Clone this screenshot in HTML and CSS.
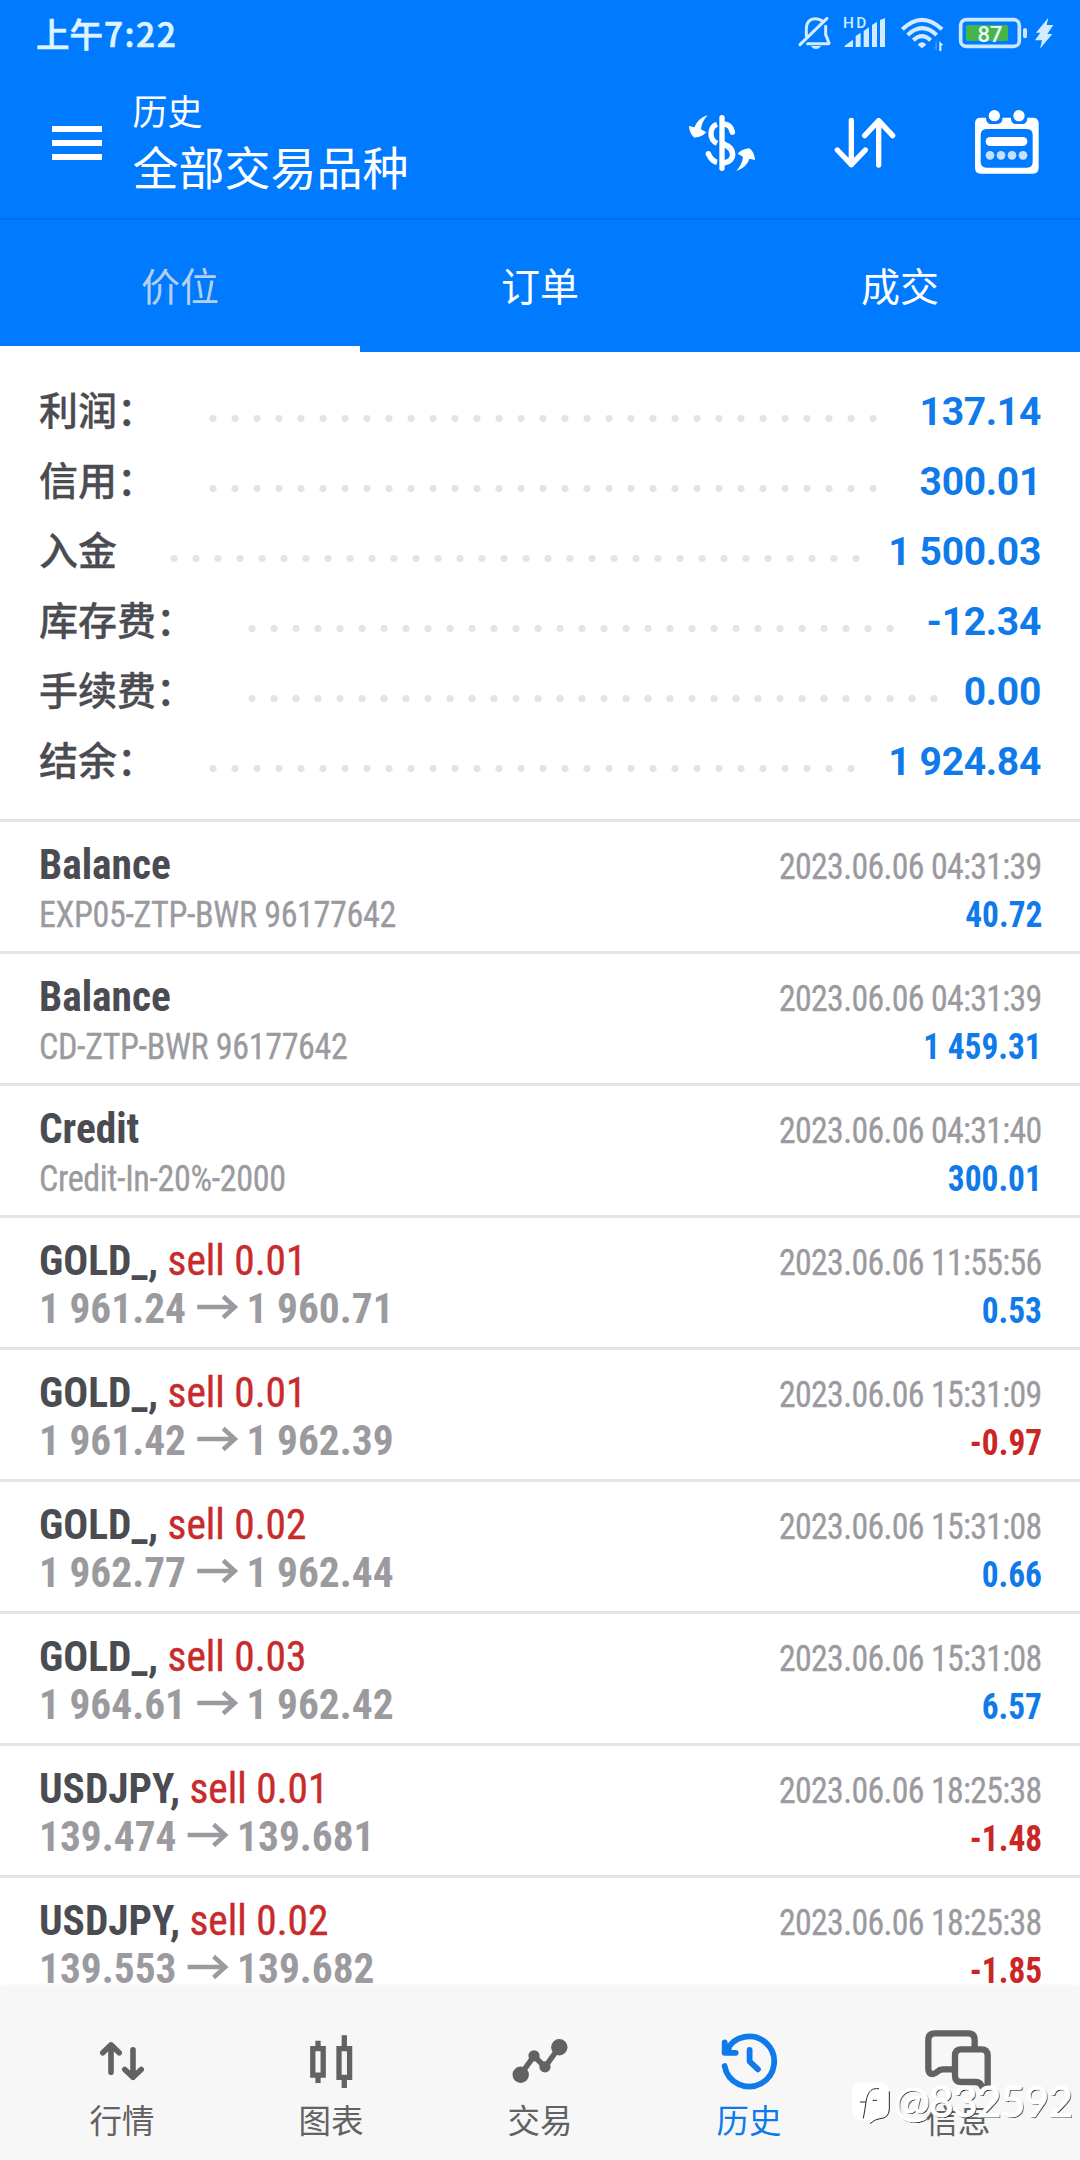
FILE: index.html
```html
<!DOCTYPE html>
<html lang="zh-CN">
<head>
<meta charset="utf-8">
<title>历史</title>
<link rel="stylesheet" href="styles.css">
</head>
<body>
<div class="app">
  <div class="status">
    <span class="clock">上午<span class="clock-num">7:22</span></span>
    <div class="status-icons">
      <svg class="bell" width="34" height="40" viewBox="414 42 102 120" fill="none" stroke="#d2ebff" stroke-width="9" stroke-linecap="round">
        <path d="M439 109V87C439 66 450 56 466 56C474 56 481 58 487 63M497 79V104L507 129Q508 131 505 131H443M420 134L501 55"/>
        <path d="M453 138H483Q478 147 468 147T453 138Z" fill="#d2ebff" stroke="none"/>
      </svg>
      <svg class="signal" width="43" height="40" viewBox="549 42 129 120" fill="#d2ebff">
        <text x="549" y="84" class="hd" textLength="70">HD</text>
        <path d="M554 141V137L579 119V141ZM587 141V108L602 98V141ZM611 141V93L627 82V141ZM636 141V75L651 65V141ZM660 141V60L675 54V141Z"/>
      </svg>
      <svg class="wifi" width="45" height="40" viewBox="720 42 135 120" fill="none" stroke="#d2ebff" stroke-width="12.5">
        <path d="M727 88Q786 31 846 88M743 105Q786 64 830 105M760 121Q786 96 812 121"/>
        <path d="M773 134Q786 120 799 134L786 145Z" fill="#d2ebff" stroke="none"/>
        <path d="M838 153V124L850 136H844V153Z" fill="#e4fbff" stroke="none"/>
        <path d="M831 124V153L820 141H826V124Z" fill="#2f96ff" stroke="none"/>
      </svg>
      <svg class="battery" width="70" height="40" viewBox="894 42 210 120">
        <rect x="902" y="59" width="176" height="80" rx="17" fill="none" stroke="#c9e7ff" stroke-width="11"/>
        <rect x="918" y="75" width="126" height="48" rx="6" fill="#46b548"/>
        <rect x="1089" y="84" width="12" height="31" rx="6" fill="#c9e7ff"/>
        <text x="990" y="125" class="pct">87</text>
      </svg>
      <svg class="bolt" width="20" height="40" viewBox="1122 42 60 120" fill="#d2ebff"><path d="M1165 53L1128 98H1141L1125 121H1146L1140 146L1177 102H1162L1180 75H1160Z"/></svg>
    </div>
  </div>

  <header class="bar">
    <svg class="menu" width="50" height="34" viewBox="0 0 50 34" fill="#fff"><path d="M0 0H50V6H0ZM0 14H50V20H0ZM0 28H50V34H0Z"/></svg>
    <div class="titles">
      <div class="crumb">历史</div>
      <h1 class="title">全部交易品种</h1>
    </div>
    <div class="actions">
      <svg width="68" height="70" viewBox="84 324 204 210" fill="none" stroke="#fff">
        <path d="M186 353V505" stroke-width="16" stroke-linecap="round"/>
        <path d="M171 373C148 381 146 418 171 430M171 487C158 484 151 475 145 461" stroke-width="16"/>
        <circle cx="145" cy="461" r="8" fill="#fff" stroke="none"/>
        <path d="M192 372C205 373 214 382 217 396M190 432C227 446 227 483 192 489" stroke-width="17" stroke-linecap="round"/>
        <path d="M143 346C124 351 110 364 104 382L87 378C88 395 95 408 105 413C116 411 128 409 139 397L123 388C125 370 132 358 143 346Z" fill="#fff" stroke="none"/>
        <path d="M229 512C248 507 262 494 268 476L285 480C284 463 277 450 267 445C256 447 244 449 233 461L249 470C247 488 240 500 229 512Z" fill="#fff" stroke="none"/>
      </svg>
      <svg width="62" height="70" viewBox="522 324 186 210" fill="none" stroke="#fff" stroke-width="16" stroke-linecap="round" stroke-linejoin="round">
        <path d="M574 361V494M532 450L574 494L616 450M656 495V362M614 407L656 362L698 407"/>
      </svg>
      <svg width="68" height="70" viewBox="939 324 204 210">
        <path fill="#fff" fill-rule="evenodd" d="M961 353H978C978 366 985 372 994 372H1012C1022 372 1028 366 1027 353H1053C1053 366 1059 372 1068 372H1086C1096 372 1102 366 1102 353H1119Q1136 353 1136 370V504Q1136 521 1119 521H962Q945 521 945 504V370Q945 353 961 353ZM980 387Q962 387 962 405V486Q962 503 980 503H1101Q1118 503 1118 486V405Q1118 387 1101 387Z"/>
        <circle cx="1003" cy="347" r="17" fill="#fff"/><circle cx="1077" cy="347" r="17" fill="#fff"/>
        <rect x="977" y="411" width="125" height="27" rx="13.5" fill="#fff"/>
        <g fill="#c4e1ff"><circle cx="990" cy="466" r="13"/><circle cx="1023" cy="466" r="13"/><circle cx="1056" cy="466" r="13"/><circle cx="1089" cy="466" r="13"/></g>
      </svg>
    </div>
  </header>

  <nav class="tabs">
    <span class="tab current">价位</span>
    <span class="tab">订单</span>
    <span class="tab">成交</span>
  </nav>

  <section class="summary">
    <div class="sum"><span>利润：</span><i class="dots" style="--n:31"></i><b>137.14</b></div>
    <div class="sum"><span>信用：</span><i class="dots" style="--n:31"></i><b>300.01</b></div>
    <div class="sum"><span>入金</span><i class="dots" style="--n:32"></i><b>1 500.03</b></div>
    <div class="sum"><span>库存费：</span><i class="dots" style="--n:30"></i><b>-12.34</b></div>
    <div class="sum"><span>手续费：</span><i class="dots" style="--n:32"></i><b>0.00</b></div>
    <div class="sum"><span>结余：</span><i class="dots" style="--n:30"></i><b>1 924.84</b></div>
  </section>

  <main class="deals">
    <article class="deal">
      <div class="line"><b class="name">Balance</b><time>2023.06.06 04:31:39</time></div>
      <div class="line"><span class="note">EXP05-ZTP-BWR 96177642</span><b class="amount">40.72</b></div>
    </article>
    <article class="deal">
      <div class="line"><b class="name">Balance</b><time>2023.06.06 04:31:39</time></div>
      <div class="line"><span class="note">CD-ZTP-BWR 96177642</span><b class="amount">1 459.31</b></div>
    </article>
    <article class="deal">
      <div class="line"><b class="name">Credit</b><time>2023.06.06 04:31:40</time></div>
      <div class="line"><span class="note">Credit-In-20%-2000</span><b class="amount">300.01</b></div>
    </article>
    <article class="deal">
      <div class="line"><span class="deal-head"><b>GOLD_,</b> <span class="side">sell 0.01</span></span><time>2023.06.06 11:55:56</time></div>
      <div class="line"><b class="price">1 961.24<svg class="arrow" viewBox="0 0 42 24"><path d="M0 12H38M27 1.5L39 12L27 22.5"/></svg>1 960.71</b><b class="amount">0.53</b></div>
    </article>
    <article class="deal">
      <div class="line"><span class="deal-head"><b>GOLD_,</b> <span class="side">sell 0.01</span></span><time>2023.06.06 15:31:09</time></div>
      <div class="line"><b class="price">1 961.42<svg class="arrow" viewBox="0 0 42 24"><path d="M0 12H38M27 1.5L39 12L27 22.5"/></svg>1 962.39</b><b class="amount loss">-0.97</b></div>
    </article>
    <article class="deal">
      <div class="line"><span class="deal-head"><b>GOLD_,</b> <span class="side">sell 0.02</span></span><time>2023.06.06 15:31:08</time></div>
      <div class="line"><b class="price">1 962.77<svg class="arrow" viewBox="0 0 42 24"><path d="M0 12H38M27 1.5L39 12L27 22.5"/></svg>1 962.44</b><b class="amount">0.66</b></div>
    </article>
    <article class="deal">
      <div class="line"><span class="deal-head"><b>GOLD_,</b> <span class="side">sell 0.03</span></span><time>2023.06.06 15:31:08</time></div>
      <div class="line"><b class="price">1 964.61<svg class="arrow" viewBox="0 0 42 24"><path d="M0 12H38M27 1.5L39 12L27 22.5"/></svg>1 962.42</b><b class="amount">6.57</b></div>
    </article>
    <article class="deal">
      <div class="line"><span class="deal-head"><b>USDJPY,</b> <span class="side">sell 0.01</span></span><time>2023.06.06 18:25:38</time></div>
      <div class="line"><b class="price">139.474<svg class="arrow" viewBox="0 0 42 24"><path d="M0 12H38M27 1.5L39 12L27 22.5"/></svg>139.681</b><b class="amount loss">-1.48</b></div>
    </article>
    <article class="deal">
      <div class="line"><span class="deal-head"><b>USDJPY,</b> <span class="side">sell 0.02</span></span><time>2023.06.06 18:25:38</time></div>
      <div class="line"><b class="price">139.553<svg class="arrow" viewBox="0 0 42 24"><path d="M0 12H38M27 1.5L39 12L27 22.5"/></svg>139.682</b><b class="amount loss">-1.85</b></div>
    </article>
  </main>

  <nav class="bottom">
    <a class="item">
      <svg width="60" height="64" viewBox="0 0 60 64" fill="none" stroke="currentColor" stroke-width="5.6" stroke-linecap="round" stroke-linejoin="round"><path d="M19 44.3V17.2M10.8 24.7L19 16.9L27.2 24.7M41 21.8V49.3M32.8 41.5L41 49.3L49.2 41.5"/></svg>
      行情
    </a>
    <a class="item">
      <svg width="60" height="64" viewBox="0 0 60 64" fill="none" stroke="currentColor" stroke-width="5.3"><path d="M11.8 20.7H22.2V47.1H11.8ZM38 20.7H48.6V49.4H38ZM17 12.7V20M17 48V55M43.3 7.3V20M43.3 50V60"/></svg>
      图表
    </a>
    <a class="item">
      <svg width="60" height="64" viewBox="0 0 60 64" fill="currentColor"><path d="M10.7 46.7L24 28L35 39L49.3 19" fill="none" stroke="currentColor" stroke-width="5.5"/><circle cx="10.7" cy="46.7" r="8.2"/><circle cx="24" cy="27.8" r="5.6"/><circle cx="35" cy="38.8" r="5.6"/><circle cx="49.3" cy="19.2" r="8.2"/></svg>
      交易
    </a>
    <a class="item on">
      <svg width="60" height="64" viewBox="0 0 60 64" fill="none" stroke="currentColor" stroke-width="5.8" stroke-linecap="round" stroke-linejoin="round"><path d="M5.6 38A25 25 0 1 0 7.5 23M5.7 14.5V24.8H16.7M5.7 24.8L10 18.5M30.6 22V33.3L39 41.3"/><path d="M4 24L12 17L13 24Z" stroke="none" fill="currentColor"/></svg>
      历史
    </a>
    <a class="item">
      <svg width="68" height="64" viewBox="252 24 204 192" fill="none" stroke="currentColor" stroke-width="19"><path d="M345 148H308C292 148 290 162 279 162Q265 162 265 146V60Q265 40 285 40H385Q404 40 404 60V85"/><path d="M443 203C432 205 427 203 424 196C420 187 414 186 405 186H365Q345 186 345 167V107Q345 88 364 88H424Q443 88 443 107Z"/></svg>
      信息
    </a>
  </nav>

  <div class="mark">
    <svg width="38" height="43" viewBox="38 187 114 129"><path d="M68 188H120Q150 188 150 218V268Q150 297 122 298L92 313L98 300H68Q38 300 38 270V218Q38 188 68 188Z" fill="#fff"/><path d="M150 215V268Q149 296 122 297Q108 298 92 312M62 247H80C84 220 94 206 112 207H119M80 247Q77 270 72 296M100 242H113" fill="none" stroke="#2a2a2a" stroke-width="3"/></svg>
    <span>@832592</span>
  </div>
</div>
</body>
</html>
```
FILE: styles.css
```css
* { box-sizing: border-box; }

body {
  margin: 0;
  font-family: Roboto, "Noto Sans CJK SC", sans-serif;
  background: #fff;
}

svg { display: block; flex: none; overflow: visible; }

.app {
  position: relative;
  width: 1080px;
  height: 2160px;
  display: flex;
  flex-direction: column;
  overflow: hidden;
}

/* Status bar */
.status {
  height: 68px;
  flex: none;
  display: flex;
  justify-content: space-between;
  align-items: center;
  padding: 0 26px 0 36px;
  background: #007aff;
}

.clock {
  margin-top: -2px;
  color: #def3ff;
  font: 500 33.5px/40px "Noto Sans CJK SC", sans-serif;
  -webkit-text-stroke: 0.7px #def3ff;
}

.clock-num { letter-spacing: 1.5px; margin-left: 1px; }

.status-icons { display: flex; }
.signal { margin-left: 11px; }
.wifi { margin-left: 14px; }
.battery { margin-left: 13px; }
.bolt { margin-left: 6px; }

.hd { font: 500 46px Roboto, sans-serif; }
.pct { font: 500 66px Roboto, sans-serif; fill: #e9fbff; text-anchor: middle; }

/* App bar */
.bar {
  height: 152px;
  flex: none;
  display: flex;
  align-items: flex-start;
  padding: 0 39px 0 52px;
  border-bottom: 2px solid #0070ea;
  background: #007aff;
  color: #fff;
}

.menu { margin-top: 58px; }

.titles {
  flex: 1;
  margin: 16px 0 0 30.5px;
  font-family: "Noto Sans CJK SC", sans-serif;
}

.crumb { font-size: 35px; line-height: 52px; font-weight: 400; }
.title { margin: -1px 0 0; font-size: 46px; line-height: 60px; font-weight: 400; }

.actions { display: flex; margin-top: 40px; }
.actions svg + svg { margin-left: 77.5px; }

/* Tabs */
.tabs {
  height: 132px;
  flex: none;
  display: grid;
  grid-template-columns: repeat(3, 1fr);
  background: #007aff;
}

.tab {
  padding-top: 35px;
  text-align: center;
  color: #fff;
  font: 400 39px/58px "Noto Sans CJK SC", sans-serif;
}

.tab.current { color: #b4cfee; border-bottom: 6px solid #fff; }

/* Account summary */
.summary {
  height: 470px;
  flex: none;
  padding: 24px 39px 0;
  border-bottom: 3px solid #e4e4e4;
}

.sum {
  height: 70px;
  display: flex;
  align-items: center;
  color: #4b4b52;
  font: 500 39px/56px "Noto Sans CJK SC", sans-serif;
}

.sum span {
  margin-top: -6px;
  -webkit-text-stroke: 0.3px #4b4b52;
}

.dots {
  width: calc(var(--n) * 22px);
  height: 7px;
  margin: 14px auto 0 46px;
  background: radial-gradient(circle, #e4e4e4 3.2px, transparent 4px) 0 0 / 22px 7px repeat-x;
}

.sum b {
  margin-top: 2px;
  color: #0f7aea;
  font: 700 39px/56px Roboto, sans-serif;
  letter-spacing: -0.3px;
}

/* Deals */
.deals { flex: none; }

.deal {
  height: 132px;
  padding: 18px 38px 0 39px;
  border-bottom: 3px solid #e4e4e4;
  font-size: 43px;
  line-height: 48px;
  font-stretch: 75%;
  color: #9a9a9f;
}

.line {
  height: 48px;
  display: flex;
  align-items: baseline;
  white-space: pre;
}

.line::before { content: "\200b"; }

/* Slightly tighter than the condensed face */
.name, .deal-head, .price { transform: scaleX(0.962); transform-origin: left; }
.name, .deal-head b { color: #4b4b52; font-weight: 700; }
.side { color: #c72b2b; -webkit-text-stroke: 0.4px #c72b2b; }
.line time {
  margin-left: auto;
  font-size: 36.5px;
  letter-spacing: -0.7px;
  transform: scaleX(0.926);
  transform-origin: right;
  -webkit-text-stroke: 0.3px #9a9a9f;
}
.note {
  font-size: 36.5px;
  letter-spacing: -0.4px;
  transform: scaleX(0.935);
  transform-origin: left;
  -webkit-text-stroke: 0.3px #9a9a9f;
}
.price { font-weight: 700; }
.amount {
  margin-left: auto;
  font-size: 36.5px;
  font-weight: 700;
  color: #0f7aea;
  transform: scaleX(0.914);
  transform-origin: right;
}
.amount.loss { color: #cb2626; }

.arrow {
  display: inline-block;
  width: 43px;
  height: 24px;
  margin: 0 9px 0 11px;
  vertical-align: 4px;
  fill: none;
  stroke: #9a9a9f;
  stroke-width: 4.6;
}

/* Bottom navigation */
.bottom {
  position: absolute;
  left: 0;
  right: 0;
  bottom: 0;
  height: 174px;
  display: grid;
  grid-template-columns: repeat(5, 209px);
  padding: 42px 0 0 17.5px;
  background: #f7f7f7;
  box-shadow: 0 0 4px #eee;
}

.item {
  display: flex;
  flex-direction: column;
  align-items: center;
  color: #626262;
  font: 400 32.5px/48px "Noto Sans CJK SC", sans-serif;
}

.item svg { margin-bottom: 3px; }
.item.on { color: #0f7aea; }

/* Account tag laid over the page corner */
.mark {
  position: absolute;
  left: 852px;
  top: 2082px;
  display: flex;
  align-items: flex-start;
  gap: 4px;
  color: #fff;
  font: 400 43px/38px Lato, sans-serif;
  letter-spacing: -1.1px;
  -webkit-text-stroke: 1px #fff;
  text-shadow: 1px 1px 0 #111;
}
```
